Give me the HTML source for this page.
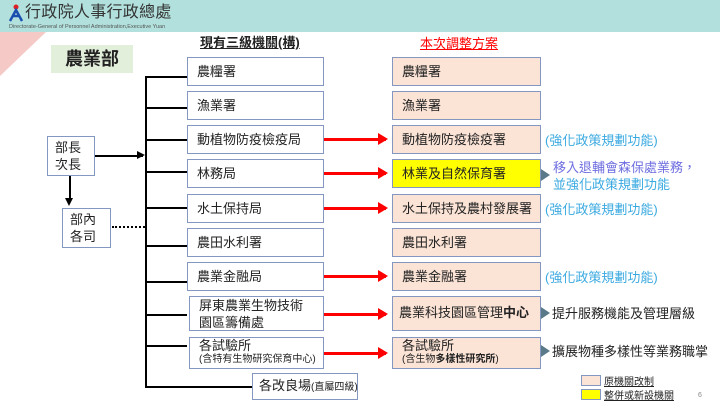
<!DOCTYPE html>
<html><head><meta charset="utf-8"><style>
*{margin:0;padding:0;box-sizing:border-box}
body{width:720px;height:406px;position:relative;background:#fff;overflow:hidden;font-family:"Liberation Sans","Noto Sans CJK TC",sans-serif;color:#222}
.a{position:absolute}
.bx{position:absolute;border:1.5px solid #8497c0;background:#fff;font-size:13px;padding-left:9px;display:flex;flex-direction:column;justify-content:center;line-height:17px}
.r{background:#fbe3d6}
.ln{position:absolute;background:#000}
.ra{position:absolute;height:3px;background:#f00}
.ra:after{content:"";position:absolute;right:-2px;top:-5px;border-left:10px solid #f00;border-top:6.5px solid transparent;border-bottom:6.5px solid transparent}
.tri{position:absolute;width:0;height:0;border-left:9px solid #5a7a8a;border-top:6px solid transparent;border-bottom:6px solid transparent}
.bl{position:absolute;color:#3aa9e0;font-size:13px}
</style></head><body>
<div class="a" style="left:0;top:0;width:720px;height:32px;background:#b2e1dd"></div>
<div class="a" style="left:0;top:32px;width:0;height:0;border-left:46px solid #f5c9c6;border-bottom:44px solid transparent"></div>
<svg class="a" style="left:9px;top:4px" width="14" height="18"><circle cx="7" cy="3" r="2.5" fill="#e02020"/><path d="M1 17 L7 6 L13 17 M4 12 H10" stroke="#1a4fb0" stroke-width="2.5" fill="none"/></svg>
<div class="a" style="left:25px;top:4px;font-size:16px;line-height:18px;color:#333;letter-spacing:0.3px">行政院人事行政總處</div>
<div class="a" style="left:9px;top:24px;font-size:5.5px;line-height:6px;color:#555;white-space:nowrap">Directorate-General of Personnel Administration,Executive Yuan</div>
<div class="a" style="left:200px;top:32px;font-size:13px;font-weight:bold;text-decoration:underline">現有三級機關(構)</div>
<div class="a" style="left:420px;top:33px;font-size:13px;color:#f00;text-decoration:underline">本次調整方案</div>
<div class="a" style="left:51px;top:45px;width:82px;height:28px;background:#e2efda;font-size:18px;font-weight:bold;text-align:center;line-height:28px">農業部</div>

<div class="ln" style="left:145px;top:77px;width:2px;height:310px"></div>
<div class="ln" style="left:145px;top:386px;width:107px;height:2px"></div>
<div class="ln" style="left:145px;top:76px;width:42px;height:2px"></div>
<div class="ln" style="left:145px;top:107px;width:42px;height:2px"></div>
<div class="ln" style="left:145px;top:139px;width:42px;height:2px"></div>
<div class="ln" style="left:145px;top:171px;width:42px;height:2px"></div>
<div class="ln" style="left:145px;top:207px;width:42px;height:2px"></div>
<div class="ln" style="left:145px;top:245px;width:42px;height:2px"></div>
<div class="ln" style="left:145px;top:281px;width:42px;height:2px"></div>
<div class="ln" style="left:145px;top:314px;width:42px;height:2px"></div>
<div class="ln" style="left:145px;top:345px;width:42px;height:2px"></div>

<div class="bx" style="left:47px;top:136px;width:48px;height:40px;padding-left:7px;font-size:13px">部長<br>次長</div>
<div class="ln" style="left:95px;top:155px;width:48px;height:1.5px"></div>
<div class="a" style="left:137px;top:151px;border-left:8px solid #000;border-top:4.5px solid transparent;border-bottom:4.5px solid transparent"></div>
<div class="ln" style="left:69px;top:176px;width:1.5px;height:26px"></div>
<div class="a" style="left:65px;top:198px;border-top:8px solid #000;border-left:4.5px solid transparent;border-right:4.5px solid transparent"></div>
<div class="bx" style="left:62px;top:208px;width:49px;height:40px;padding-left:7px">部內<br>各司</div>
<div class="a" style="left:112px;top:226px;width:33px;border-top:2px dotted #000"></div>

<div class="bx" style="left:187px;top:57px;width:137px;height:29px">農糧署</div>
<div class="bx" style="left:187px;top:91px;width:137px;height:29px">漁業署</div>
<div class="bx" style="left:187px;top:125px;width:137px;height:29px">動植物防疫檢疫局</div>
<div class="bx" style="left:187px;top:159px;width:137px;height:29px">林務局</div>
<div class="bx" style="left:187px;top:194px;width:137px;height:29px">水土保持局</div>
<div class="bx" style="left:187px;top:228px;width:137px;height:29px">農田水利署</div>
<div class="bx" style="left:187px;top:262px;width:137px;height:29px">農業金融局</div>
<div class="bx" style="left:189px;top:296px;width:135px;height:35px">屏東農業生物技術<br>園區籌備處</div>
<div class="bx" style="left:189px;top:337px;width:135px;height:32px;line-height:14px">各試驗所<span style="font-size:10px">(含特有生物研究保育中心)</span></div>
<div class="bx" style="left:252px;top:373px;width:106px;height:27px;display:block;line-height:24px;font-size:13px;padding-left:6px;white-space:nowrap">各改良場<span style="font-size:10px">(直屬四級)</span></div>

<div class="ra" style="left:324px;top:138px;width:62px"></div>
<div class="ra" style="left:324px;top:172px;width:62px"></div>
<div class="ra" style="left:324px;top:207px;width:62px"></div>
<div class="ra" style="left:324px;top:275px;width:62px"></div>
<div class="ra" style="left:324px;top:313px;width:62px"></div>
<div class="ra" style="left:324px;top:352px;width:62px"></div>

<div class="bx r" style="left:392px;top:57px;width:149px;height:29px">農糧署</div>
<div class="bx r" style="left:392px;top:91px;width:149px;height:29px">漁業署</div>
<div class="bx r" style="left:392px;top:125px;width:149px;height:29px">動植物防疫檢疫署</div>
<div class="bx" style="left:392px;top:159px;width:149px;height:29px;background:#ffff00">林業及自然保育署</div>
<div class="bx r" style="left:392px;top:194px;width:149px;height:29px">水土保持及農村發展署</div>
<div class="bx r" style="left:392px;top:228px;width:149px;height:29px">農田水利署</div>
<div class="bx r" style="left:392px;top:262px;width:149px;height:29px">農業金融署</div>
<div class="bx r" style="left:392px;top:296px;width:149px;height:35px;display:block;line-height:32px;padding-left:6px">農業科技園區管理<b>中心</b></div>
<div class="bx r" style="left:392px;top:337px;width:149px;height:32px;line-height:14px">各試驗所<span style="font-size:10px">(含生物<b>多樣性研究所</b>)</span></div>

<div class="bl" style="left:545px;top:130px">(強化政策規劃功能)</div>
<div class="tri" style="left:541px;top:169px"></div>
<div class="bl" style="left:553px;top:157px;color:#6e6ee0">移入退輔會森保處業務，</div>
<div class="bl" style="left:553px;top:174px">並強化政策規劃功能</div>
<div class="bl" style="left:545px;top:199px">(強化政策規劃功能)</div>
<div class="bl" style="left:545px;top:267px">(強化政策規劃功能)</div>
<div class="tri" style="left:541px;top:307px"></div>
<div class="a" style="left:552px;top:303px;font-size:13px">提升服務機能及管理層級</div>
<div class="tri" style="left:541px;top:345px"></div>
<div class="a" style="left:552px;top:341px;font-size:13px">擴展物種多樣性等業務職掌</div>

<div class="a" style="left:581px;top:375px;width:20px;height:11px;background:#fbe3d6;border:1px solid #8497c0"></div>
<div class="a" style="left:604px;top:373px;font-size:10px;text-decoration:underline">原機關改制</div>
<div class="a" style="left:581px;top:389px;width:20px;height:11px;background:#ffff00;border:1px solid #8497c0"></div>
<div class="a" style="left:604px;top:387px;font-size:10px;text-decoration:underline">整併或新設機關</div>
<div class="a" style="left:698px;top:392px;font-size:7px;color:#888">6</div>
</body></html>
